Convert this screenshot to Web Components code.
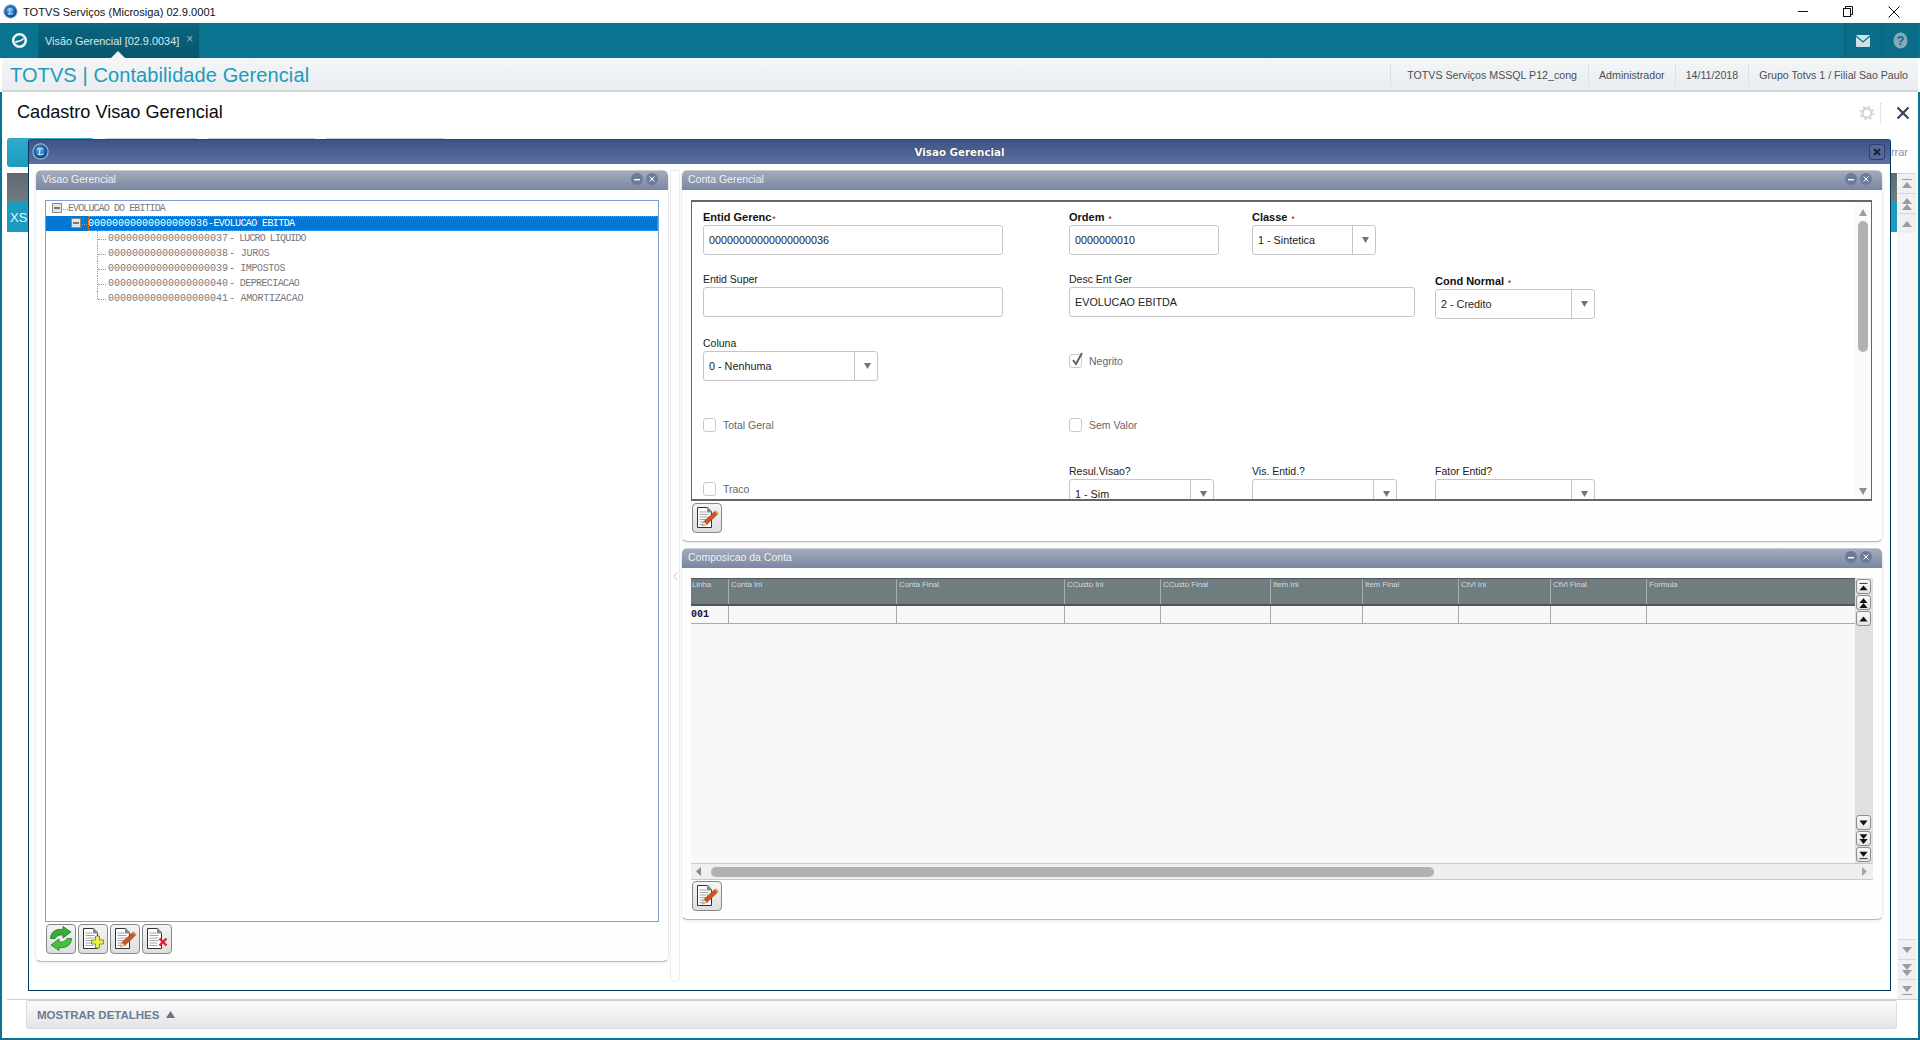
<!DOCTYPE html>
<html lang="pt">
<head>
<meta charset="utf-8">
<title>Cadastro Visao Gerencial</title>
<style>
  html, body { margin: 0; height: 1040px; overflow: hidden; background: #fff; font-family: "Liberation Sans", Arial, sans-serif; }
</style>
</head>
<body>
<totvs-app>
  <window-bar title-text="TOTVS Serviços (Microsiga) 02.9.0001"></window-bar>
  <tab-bar tab-text="Visão Gerencial [02.9.0034]"></tab-bar>
  <module-header module="TOTVS | Contabilidade Gerencial"></module-header>
  <back-page heading="Cadastro Visao Gerencial"></back-page>

  <tot-dialog dialog-title="Visao Gerencial">
    <tot-panel slot="left" panel-title="Visao Gerencial" style="height:792px">
      <tree-view>
        <tree-row level="0" toggle style="--ls:-.9px">EVOLUCAO DO EBITIDA</tree-row>
        <tree-row level="1" toggle selected code="00000000000000000036" style="--ls:-.6px">-EVOLUCAO EBITDA</tree-row>
        <tree-row level="2" code="00000000000000000037" style="--ls:-.9px">- LUCRO LIQUIDO</tree-row>
        <tree-row level="2" code="00000000000000000038" style="--ls:-.2px">- JUROS</tree-row>
        <tree-row level="2" code="00000000000000000039" style="--ls:-.4px">- IMPOSTOS</tree-row>
        <tree-row level="2" code="00000000000000000040" style="--ls:-.6px">- DEPRECIACAO</tree-row>
        <tree-row level="2" last code="00000000000000000041" style="--ls:-.3px">- AMORTIZACAO</tree-row>
      </tree-view>
      <div style="display:flex;gap:2px;padding:2px 0 0 1px">
        <icon-btn kind="refresh"></icon-btn>
        <icon-btn kind="add"></icon-btn>
        <icon-btn kind="edit"></icon-btn>
        <icon-btn kind="delete"></icon-btn>
      </div>
    </tot-panel>

    <tot-panel slot="right" panel-title="Conta Gerencial" style="height:372px">
      <form-box>
        <tot-field label="Entid Gerenc" bold required tight value="00000000000000000036" width="300"></tot-field>
        <tot-field label="Ordem" bold required value="0000000010" width="150"></tot-field>
        <tot-field label="Classe" bold required select value="1 - Sintetica" width="124"></tot-field>
        <span></span>

        <tot-field label="Entid Super" width="300"></tot-field>
        <tot-field label="Desc Ent Ger" value="EVOLUCAO EBITDA" width="346" style="grid-column:span 2"></tot-field>
        <tot-field label="Cond Normal" bold required select value="2 - Credito" width="160" style="margin-top:2px"></tot-field>

        <tot-field label="Coluna" select value="0 - Nenhuma" width="175"></tot-field>
        <tot-check label="Negrito" checked style="margin-top:18px;grid-column:span 3"></tot-check>

        <tot-check label="Total Geral" style="margin-top:20px"></tot-check>
        <tot-check label="Sem Valor" style="margin-top:20px;grid-column:span 3"></tot-check>

        <tot-check label="Traco" style="margin-top:18px"></tot-check>
        <tot-field label="Resul.Visao?" select value="1 - Sim" width="145"></tot-field>
        <tot-field label="Vis. Entid.?" select width="145"></tot-field>
        <tot-field label="Fator Entid?" select width="160"></tot-field>
      </form-box>
      <div style="padding:2px 0 0 1px"><icon-btn kind="edit"></icon-btn></div>
    </tot-panel>

    <tot-panel slot="right" panel-title="Composicao da Conta" style="height:372px">
      <data-grid></data-grid>
      <div style="padding:1px 0 0 1px"><icon-btn kind="edit"></icon-btn></div>
    </tot-panel>
  </tot-dialog>
</totvs-app>

<script>
function tri(dir, x, y, w, h, fill) {
  const pts = dir === 'up'
    ? `${x},${y + h} ${x + w},${y + h} ${x + w / 2},${y}`
    : `${x},${y} ${x + w},${y} ${x + w / 2},${y + h}`;
  return `<polygon points="${pts}" fill="${fill}"/>`;
}

// first / page / line scroll glyphs, 16x14
function scrollGlyph(kind, dir, fill) {
  const bar = (y) => `<rect x="3" y="${y}" width="10" height="1" fill="${fill}"/>`;
  if (kind === 'end') {
    return dir === 'up'
      ? bar(2) + tri('up', 3, 5, 10, 6, fill)
      : tri('down', 3, 3, 10, 6, fill) + bar(11);
  }
  if (kind === 'page') {
    return tri(dir, 3, 1, 10, 6, fill) + tri(dir, 3, 7, 10, 6, fill);
  }
  return tri(dir, 3, 4, 10, 6, fill);
}

function totvsLogo(size) {
  return `<svg width="${size}" height="${size}" viewBox="0 0 20 20">
    <defs><radialGradient id="g" cx="45%" cy="42%" r="60%"><stop offset="0" stop-color="#6db4ee"/><stop offset=".65" stop-color="#1464b2"/><stop offset="1" stop-color="#0b3c78"/></radialGradient></defs>
    <circle cx="10" cy="10" r="9.6" fill="#a9b7c8"/>
    <circle cx="10" cy="10" r="8.2" fill="url(#g)"/>
    <path d="M6 7.500c2-1.500 5-1.500 7 0M9 7.500v5.500M6.500 13c2 1 5 1 7-.5" fill="none" stroke="#d5e8f8" stroke-width="1.300"/>
  </svg>`;
}

class TotvsApp extends HTMLElement {
  constructor() {
    super();
    this.attachShadow({ mode: 'open' }).innerHTML = `
      <style>
        :host { display: flex; flex-direction: column; position: relative; height: 1040px; width: 1920px; overflow: hidden; background: #fff; }
      </style>
      <slot></slot>`;
  }
}

class WindowBar extends HTMLElement {
  constructor() {
    super();
    this.attachShadow({ mode: 'open' }).innerHTML = `
      <style>
        :host { display: flex; align-items: center; height: 23px; background: #fff; color: #111; font: 11.100px "Liberation Sans", Arial, sans-serif; flex: none; }
        .logo { display: flex; margin: 0 5px 0 3px; }
        .name { flex: 1; }
        .ctl { width: 45px; height: 23px; display: flex; align-items: center; justify-content: center; }
        .ctl:last-child { width: 49px; padding-right: 4px; box-sizing: border-box; }
      </style>
      <span class="logo">${totvsLogo(15)}</span>
      <span class="name">${this.getAttribute('title-text')}</span>
      <span class="ctl"><svg width="11" height="11"><rect x="0" y="5" width="10" height="1" fill="#111"/></svg></span>
      <span class="ctl"><svg width="11" height="12"><rect x="0.500" y="2.500" width="7" height="8" fill="#fff" stroke="#111"/><path d="M2.500 2.500V.500h7v8h-2" fill="none" stroke="#111"/></svg></span>
      <span class="ctl"><svg width="12" height="12"><path d="M.5.500l11 11M11.500.500l-11 11" stroke="#111" fill="none"/></svg></span>`;
  }
}

class TabBar extends HTMLElement {
  constructor() {
    super();
    this.attachShadow({ mode: 'open' }).innerHTML = `
      <style>
        :host { display: flex; height: 35px; background: #0a7390; flex: none; color: #fff; font: 10.900px "Liberation Sans", Arial, sans-serif; }
        .home { width: 38px; display: flex; align-items: center; justify-content: center; border-right: 1px solid #0a6580; }
        .tab { position: relative; width: 160px; display: flex; align-items: center; padding-left: 6px; box-sizing: border-box; background: linear-gradient(#0a667f, #07566c); color: #dbe9ee; white-space: nowrap; }
        .tab b { font-weight: normal; margin-left: 7px; margin-top: -3px; color: #8db7c4; font-size: 12px; }
        .tab i { position: absolute; left: 72px; bottom: 0; border: 7px solid transparent; border-top: 0; border-bottom-color: #f0f2f4; }
        .fill { flex: 1; }
        .cell { width: 36px; display: flex; align-items: center; justify-content: center; background: #0a6c87; border-left: 1px solid #0a627a; }
      </style>
      <span class="home"><svg width="17" height="17" viewBox="0 0 17 17"><circle cx="8.500" cy="8.500" r="6.300" fill="none" stroke="#f2f6f8" stroke-width="2.600"/><path d="M4.500 10.500c2.500-2.500 3.500 1 8-4" fill="none" stroke="#f2f6f8" stroke-width="1.800"/></svg></span>
      <span class="tab">${this.getAttribute('tab-text')}<b>×</b><i></i></span>
      <span class="fill"></span>
      <span class="cell"><svg width="14" height="12" viewBox="0 0 14 12"><rect width="14" height="12" rx="1" fill="#cfe1e8"/><path d="M0 1l7 6 7-6" fill="none" stroke="#0a6c87" stroke-width="1.200"/></svg></span>
      <span class="cell" style="margin-right:2px"><svg width="15" height="17" viewBox="0 0 15 17"><ellipse cx="7.500" cy="8.500" rx="7" ry="8" fill="#83a9b8"/><text x="7.500" y="13" text-anchor="middle" font-family="Liberation Sans" font-weight="bold" font-size="13" fill="#0a6c87">?</text></svg></span>`;
  }
}

class ModuleHeader extends HTMLElement {
  constructor() {
    super();
    const info = ['TOTVS Serviços MSSQL P12_cong', 'Administrador', '14/11/2018', 'Grupo Totvs 1 / Filial Sao Paulo'];
    this.attachShadow({ mode: 'open' }).innerHTML = `
      <style>
        :host { display: flex; align-items: center; height: 34px; box-sizing: border-box; margin: 0 2px; padding-left: 8px; padding-top: 2px; flex: none;
          background: linear-gradient(#f4f6f7, #e9edf0); border-bottom: 2px solid #d2d5d8; }
        h1 { flex: 1; margin: 0; font: normal 20px "Liberation Sans", Arial, sans-serif; letter-spacing: .1px; color: #1b9cbd; }
        span { height: 22px; display: flex; align-items: center; padding: 0 10px; font-size: 10.650px; color: #4a4f55; border-left: 1px solid #dcdfe2; }
        span:first-of-type { padding: 0 11px 0 16px; }
        span:last-of-type { padding-right: 10px; }
      </style>
      <h1>${this.getAttribute('module')}</h1>
      ${info.map((t) => `<span>${t}</span>`).join('')}`;
  }
}

class ScrollButton extends HTMLElement {
  constructor() {
    super();
    const kind = this.getAttribute('kind');
    const dir = this.getAttribute('dir');
    this.attachShadow({ mode: 'open' }).innerHTML = `
      <style>
        :host { display: flex; align-items: center; justify-content: center; box-sizing: border-box; }
        :host([soft]) { height: 20px; width: 18px; background: #eef0f2; border-top: 1px solid #d5d7d9; }
        :host([hard]) { height: 15px; width: 15px; margin-bottom: 1px; background: linear-gradient(#fafafa, #e4e4e4); border: 1px solid #8d8d8d; border-radius: 3px; }
      </style>
      <svg width="16" height="14" viewBox="0 0 16 14">${scrollGlyph(kind, dir, this.hasAttribute('hard') ? '#111' : '#9a9da2')}</svg>`;
  }
}

class BackPage extends HTMLElement {
  constructor() {
    super();
    this.attachShadow({ mode: 'open' }).innerHTML = `
      <style>
        :host { display: flex; flex-direction: column; flex: 1; min-height: 0; border: 2px solid #0a7390; border-top: 0; box-sizing: border-box; background: #fff; }
        .head { height: 46px; flex: none; box-sizing: border-box; display: flex; align-items: flex-start; padding: 9px 0 0 15px; margin-top: 1px; }
        h2 { flex: 1; margin: 0; font: normal 18.100px "Liberation Sans", Arial, sans-serif; color: #0b0b0b; line-height: 20px; }
        .tools { display: flex; align-items: center; height: 22px; }
        .tools u { width: 0; height: 20px; border-left: 1px dotted #ccc; margin: 0 15px 0 6px; }
        .tools svg:last-child { margin-right: 8px; }
        .tabs { height: 29px; flex: none; display: flex; gap: 11px; padding-left: 5px; margin-top: -1px; }
        .tabs i { display: block; height: 1px; background: #c7cdd3; margin-top: 0; }
        .tabs .on { width: 87px; height: 29px; background: linear-gradient(#32aac9, #1b9bbd); border-radius: 3px; }
        .more { margin-left: auto; font-size: 11px; color: #8b8fa0; padding: 8px 10px 0 0; }
        .mid { flex: 1; display: flex; margin-top: 6px; min-height: 0; }
        .main { flex: 1; padding-left: 5px; }
        .dark { height: 29px; background: linear-gradient(#5f6b70, #707c80); }
        .blue { height: 30px; background: #1b9bbd; color: #e6f6fa; font-size: 13px; display: flex; align-items: center; padding-left: 3px; }
        .side { width: 21px; background: #f6f7f9; display: flex; flex-direction: column; justify-content: space-between; padding-left: 1px; box-sizing: border-box; }
        .foot { height: 39px; flex: none; margin-left: 5px; border-top: 1px solid #cfcfcf; box-sizing: border-box; padding-left: 19px; }
        .bar { width: 1871px; height: 29px; box-sizing: border-box; background: linear-gradient(#fbfbfb, #e4e4e4); border: 1px solid #dcdcdc; border-top-color: #cfcfcf; border-radius: 3px; display: flex; align-items: center; gap: 7px; padding-left: 10px; font: bold 11.500px "Liberation Sans", Arial, sans-serif; color: #6c7c95; }
      </style>
      <div class="head">
        <h2>${this.getAttribute('heading')}</h2>
        <div class="tools">
          <svg width="14" height="14" viewBox="0 0 14 14"><circle cx="7" cy="7" r="4.500" fill="none" stroke="#cfd2d4" stroke-width="2"/><circle cx="7" cy="7" r="6.500" fill="none" stroke="#d8dadc" stroke-width="1.800" stroke-dasharray="2.500 2.600"/></svg>
          <u></u>
          <svg width="14" height="14" viewBox="0 0 14 14"><path d="M1.500 1.500l11 11M12.500 1.500l-11 11" stroke="#33465c" stroke-width="2.200" fill="none"/></svg>
        </div>
      </div>
      <div class="tabs">
        <div class="on"></div>
        <i style="width:92px"></i><i style="width:107px"></i><i style="width:118px"></i>
        <span class="more">Encerrar</span>
      </div>
      <div class="mid">
        <div class="main"><div class="dark"></div><div class="blue">XS</div></div>
        <div class="side">
          <div>
            <scroll-button soft kind="end" dir="up"></scroll-button>
            <scroll-button soft kind="page" dir="up"></scroll-button>
            <scroll-button soft kind="line" dir="up"></scroll-button>
          </div>
          <div>
            <scroll-button soft kind="line" dir="down"></scroll-button>
            <scroll-button soft kind="page" dir="down"></scroll-button>
            <scroll-button soft kind="end" dir="down"></scroll-button>
          </div>
        </div>
      </div>
      <div class="foot"><div class="bar">MOSTRAR DETALHES <svg width="9" height="7"><polygon points="0,7 9,7 4.500,0" fill="#6c7288"/></svg></div></div>`;
  }
}

class TotDialog extends HTMLElement {
  constructor() {
    super();
    this.attachShadow({ mode: 'open' }).innerHTML = `
      <style>
        :host { display: flex; flex-direction: column; position: absolute; left: 28px; top: 139px; width: 1863px; height: 852px; box-sizing: border-box; background: #fff; border: 1px solid #04385e; border-radius: 3px 3px 0 0; border-top-color: #39445a; }
        .title { height: 24px; flex: none; box-sizing: border-box; padding-bottom: 1px; position: relative; background: linear-gradient(#3d5387, #5c70a0); color: #fff; display: flex; align-items: center; justify-content: center; font: bold 10.300px "DejaVu Sans", sans-serif; text-shadow: 0 0 1px #222; }
        .logo { position: absolute; left: 3px; top: 3px; display: flex; }
        .x { position: absolute; right: 5px; top: 4px; width: 16px; height: 16px; box-sizing: border-box; border: 1px solid #2c3f6e; border-radius: 3px; background: #55689a; display: flex; align-items: center; justify-content: center; }
        .body { flex: 1; display: flex; padding: 6px 7px 0 6px; min-height: 0; }
        .left { width: 634px; flex: none; }
        .split { width: 10px; flex: none; height: 812px; margin-left: 1px; box-sizing: border-box; border: 1px solid #ebebeb; border-radius: 0 0 4px 4px; display: flex; align-items: center; justify-content: center; }
        .right { flex: 1; margin-left: 1px; display: flex; flex-direction: column; gap: 6px; min-width: 0; }
      </style>
      <div class="title">
        <span class="logo">${totvsLogo(17)}</span>
        ${this.getAttribute('dialog-title')}
        <span class="x"><svg width="8" height="8"><path d="M1 1l6 6M7 1l-6 6" stroke="#1b2238" stroke-width="2"/></svg></span>
      </div>
      <div class="body">
        <div class="left"><slot name="left"></slot></div>
        <div class="split"><svg width="5" height="9"><path d="M4.500 .5L.5 4.500l4 4" fill="none" stroke="#c4c4c4"/></svg></div>
        <div class="right"><slot name="right"></slot></div>
      </div>`;
  }
}

class TotPanel extends HTMLElement {
  constructor() {
    super();
    this.attachShadow({ mode: 'open' }).innerHTML = `
      <style>
        :host { display: flex; flex-direction: column; box-sizing: border-box; border-radius: 6px; border-bottom: 1px solid #b8b8b8; border-left: 1px solid #ececec; border-right: 1px solid #ececec; background: #fefefe; overflow: hidden; box-shadow: 0 2px 3px #f0f0f0; }
        .head { height: 20px; flex: none; margin: 0 -1px; background: linear-gradient(#a3abbb, #7a87a2); border-top: 1px solid #c6cad2; box-sizing: border-box; color: #eef0f4; font: 10.500px "Liberation Sans", Arial, sans-serif; display: flex; align-items: center; padding: 0 0 3px 7px; }
        .head span { flex: 1; }
        .round { width: 12px; height: 12px; border-radius: 50%; background: #6d7b9a; margin-right: 3px; display: flex; align-items: center; justify-content: center; }
        .round:last-child { margin-right: 11px; }
        .body { flex: 1; padding: 10px 10px 0 9px; min-height: 0; }
      </style>
      <div class="head">
        <span>${this.getAttribute('panel-title')}</span>
        <i class="round"><svg width="6" height="6"><rect y="3" width="6" height="1.400" fill="#fff"/></svg></i>
        <i class="round"><svg width="6" height="6"><path d="M.5.500l5 5M5.500.500l-5 5" stroke="#fff"/></svg></i>
      </div>
      <div class="body"><slot></slot></div>`;
  }
}

class TreeView extends HTMLElement {
  constructor() {
    super();
    this.attachShadow({ mode: 'open' }).innerHTML = `
      <style>
        :host { display: block; height: 722px; margin-right: -1px; box-sizing: border-box; border: 1px solid #7f9fdc; background: #fff; }
      </style>
      <slot></slot>`;
  }
}

class TreeRow extends HTMLElement {
  constructor() {
    super();
    const level = Number(this.getAttribute('level'));
    const toggle = this.hasAttribute('toggle');
    const code = this.getAttribute('code');
    const boxX = 6 + level * 19;
    const minus = `<svg class="tg" width="10" height="10" style="left:${boxX}px"><rect x=".5" y=".5" width="9" height="9" fill="#e4e4e4" stroke="#8a8a8a"/><rect x="2" y="4" width="6" height="2" fill="#777"/></svg>`;
    // dotted connectors for the leaves of the tree
    const leaf = `<i class="v" style="${this.hasAttribute('last') ? 'height:8px' : ''}"></i><i class="h"></i>`;
    const textLeft = level === 0 ? 22 : level === 1 ? 42 : 62;
    this.attachShadow({ mode: 'open' }).innerHTML = `
      <style>
        :host { display: block; height: 15px; position: relative; overflow: hidden; font: 10px/15px "Liberation Mono", "DejaVu Sans Mono", monospace; color: #77777f; white-space: nowrap; }
        :host([selected]) { background: #0078d7; color: #fff; }
        .tg { position: absolute; top: 2px; }
        .v { position: absolute; left: 51px; top: 0; height: 15px; border-left: 1px dotted #999; }
        .h { position: absolute; left: 52px; top: 8px; width: 8px; border-top: 1px dotted #999; }
        .dots { position: absolute; top: 8px; width: 5px; border-top: 1px dotted #999; }
        .t { position: absolute; top: 0; right: 0; box-sizing: border-box; height: 15px; }
        :host([selected]) .t { outline: 1px dotted #f08020; outline-offset: -1px; }
        .desc { letter-spacing: var(--ls, 0); }
        :host([level="2"]) .desc { margin-left: 1px; }
      </style>
      ${toggle ? minus + `<i class="dots" style="left:${boxX + 11}px"></i>` : leaf}
      <span class="t" style="left:${textLeft}px">${code ? `<span>${code}</span>` : ''}<span class="desc"><slot></slot></span></span>`;
  }
}

class IconBtn extends HTMLElement {
  constructor() {
    super();
    const doc = `
      <path d="M4.500 2.500h10l4 4v16h-14z" fill="#fff" stroke="#333"/>
      <path d="M14 2h1l4 4.500v1h-5z" fill="#8a8a8a"/>
      <path d="M6.500 7h7M6.500 9.500h9M6.500 12h9M6.500 14.500h9M6.500 17h8M6.500 19.500h8" stroke="#a4a4a4"/>`;
    const icons = {
      refresh: `
        <path d="M3.500 12.500C3.500 6 9 2.500 16 3.500V0.500l8 5.500-8 6V9c-4-.5-6 .5-8 3.500z" fill="#35ad3a" stroke="#1d7a24" stroke-width=".8"/>
        <path d="M24.500 12.500C24.500 19 19 22.500 12 21.500v3l-8-5.500 8-6v3c4 .5 6-.5 8-3.500z" fill="#46bf45" stroke="#1d7a24" stroke-width=".8"/>`,
      add: doc + `<path d="M17 12h4v4h4v4h-4v4h-4v-4h-4v-4h4z" transform="translate(-.5 -2)" fill="#e8f24a" stroke="#6c7a20" stroke-width=".8"/>`,
      edit: doc + `<path d="M9 21l1.800-4.500L21.500 6.500l3 2.800L14 19.500z" fill="#c9552b" stroke="#8e3a1c" stroke-width=".5"/><path d="M21.500 6.500l1.200-1.200 3 2.800-1.200 1.200z" fill="#e6a93a"/><path d="M9 21l1.800-4.500 3.200 3z" fill="#f1d9a8"/>`,
      delete: doc + `<path d="M16.500 12.500l7 7M23.500 12.500l-7 7" fill="none" stroke="#e0202c" stroke-width="2.400"/>`
    };
    this.attachShadow({ mode: 'open' }).innerHTML = `
      <style>
        :host { display: inline-flex; align-items: center; justify-content: center; width: 30px; height: 30px; box-sizing: border-box; border: 1px solid #888; border-radius: 4px; background: linear-gradient(#f5f5f5, #dedede); flex: none; }
      </style>
      <svg width="28" height="26" viewBox="0 0 28 26">${icons[this.getAttribute('kind')]}</svg>`;
  }
}

class FormBox extends HTMLElement {
  constructor() {
    super();
    this.attachShadow({ mode: 'open' }).innerHTML = `
      <style>
        :host { display: block; position: relative; height: 301px; box-sizing: border-box; border: 1px solid #666; border-top-width: 2px; border-bottom-width: 2px; overflow: hidden; background: #fff; }
        .grid { display: grid; grid-template-columns: 366px 183px 183px 1fr; grid-template-rows: 45px 47px 45px 49px 45px; row-gap: 17px; padding: 8px 0 0 11px; align-items: start; }
        .sb { position: absolute; right: 0; top: 0; bottom: 0; width: 16px; background: #fafafa; }
        .thumb { position: absolute; left: 3px; top: 19px; width: 10px; height: 131px; border-radius: 5px; background: #b1b1b1; }
        svg { position: absolute; left: 1px; }
      </style>
      <div class="grid"><slot></slot></div>
      <div class="sb">
        <svg width="14" height="10" style="top:5px"><polygon points="3,9 11,9 7,2" fill="#9a9da2"/></svg>
        <div class="thumb"></div>
        <svg width="14" height="10" style="bottom:2px"><polygon points="3,1 11,1 7,8" fill="#8d9096"/></svg>
      </div>`;
  }
}

class TotField extends HTMLElement {
  constructor() {
    super();
    const bold = this.hasAttribute('bold');
    const select = this.hasAttribute('select');
    const req = this.hasAttribute('required');
    const value = this.getAttribute('value') || '';
    this.attachShadow({ mode: 'open' }).innerHTML = `
      <style>
        :host { display: block; font-family: "Liberation Sans", Arial, sans-serif; }
        label { display: block; height: 15px; line-height: 14px; font-size: 10.500px; color: #222; white-space: nowrap; }
        label.b { font: bold 11px/14px "Liberation Sans", Arial, sans-serif; color: #111; }
        label em { color: #f0304a; font-style: normal; font-weight: bold; margin-left: 4px; font-size: 9px; }
        label.t em { margin-left: 1px; }
        .in { width: ${this.getAttribute('width')}px; height: 30px; box-sizing: border-box; border: 1px solid #c6c6c6; border-radius: 3px; background: #fff; display: flex; font-size: 10.800px; color: #222; }
        .v { flex: 1; padding-left: 5px; display: flex; align-items: center; white-space: nowrap; }
        .a { width: 23px; border-left: 1px solid #c6c6c6; display: flex; align-items: center; justify-content: center; padding-left: 3px; box-sizing: border-box; }
      </style>
      <label class="${bold ? 'b' : ''} ${this.hasAttribute('tight') ? 't' : ''}">${this.getAttribute('label')}${req ? '<em>•</em>' : ''}</label>
      <div class="in">
        <span class="v">${value}</span>
        ${select ? '<span class="a"><svg width="9" height="8"><polygon points="1,1 8,1 4.500,7" fill="#6e7480"/></svg></span>' : ''}
      </div>`;
  }
}

class TotCheck extends HTMLElement {
  constructor() {
    super();
    const mark = this.hasAttribute('checked')
      ? '<svg width="14" height="15" viewBox="0 0 14 15" style="position:absolute;left:0;top:-3px"><path d="M3 8l3 4 6-11" fill="none" stroke="#555b66" stroke-width="1.800"/></svg>'
      : '';
    this.attachShadow({ mode: 'open' }).innerHTML = `
      <style>
        :host { display: flex; align-items: center; gap: 7px; font: 10.500px "Liberation Sans", Arial, sans-serif; color: #666; height: 14px; }
        .c { position: relative; width: 13px; height: 14px; box-sizing: border-box; border: 1px solid #c9c9c9; border-radius: 3px; background: #fff; flex: none; }
      </style>
      <span class="c">${mark}</span><span>${this.getAttribute('label')}</span>`;
  }
}

class DataGrid extends HTMLElement {
  constructor() {
    super();
    const cols = ['Linha', 'Conta Ini', 'Conta Final', 'CCusto Ini', 'CCusto Final', 'Item Ini', 'Item Final', 'CtVl Ini', 'CtVl Final', 'Formula'];
    const widths = [37, 168, 168, 96, 110, 92, 96, 92, 96, 209];
    const tpl = widths.map((w) => w + 'px').join(' ');
    this.attachShadow({ mode: 'open' }).innerHTML = `
      <style>
        :host { display: grid; grid-template-columns: 1164px 18px; grid-template-rows: 285px 17px; height: 302px; font-family: "Liberation Sans", Arial, sans-serif; }
        .table { background: #f8f8f8; display: flex; flex-direction: column; }
        .row { display: grid; grid-template-columns: ${tpl}; flex: none; }
        .hd { height: 28px; background: #6f7c80; border-top: 1px solid #4f595c; border-bottom: 2px solid #4f595c; box-sizing: border-box; }
        .hd span { color: #d5dadc; font-size: 8px; line-height: 11px; padding: 0 0 0 2px; border-left: 1px solid #a7aeb0; letter-spacing: -.1px; white-space: nowrap; overflow: hidden; }
        .hd span:first-child { border-left: 0; padding-left: 1px; }
        .bd { height: 18px; border-bottom: 1px solid #a9a9a9; box-sizing: border-box; }
        .bd span { border-left: 1px solid #a9a9a9; font: bold 10px/17px "Liberation Mono", monospace; color: #1a1030; }
        .bd span:first-child { border-left: 0; }
        .vs { background: #e0e0e0; display: flex; flex-direction: column; justify-content: space-between; padding: 1px 0 0 1px; box-sizing: border-box; }
        .hs { grid-column: 1 / 3; background: #efefef; border-top: 1px solid #c9c9c9; border-bottom: 1px solid #c9c9c9; position: relative; box-sizing: border-box; }
        .hs i { position: absolute; left: 20px; top: 3px; width: 723px; height: 10px; border-radius: 5px; background: #b1b1b1; }
        .hs svg { position: absolute; top: 2px; }
      </style>
      <div class="table">
        <div class="row hd">${cols.map((c) => `<span>${c}</span>`).join('')}</div>
        <div class="row bd"><span>001</span>${cols.slice(1).map(() => '<span></span>').join('')}</div>
      </div>
      <div class="vs">
        <div>
          <scroll-button hard kind="end" dir="up"></scroll-button>
          <scroll-button hard kind="page" dir="up"></scroll-button>
          <scroll-button hard kind="line" dir="up"></scroll-button>
        </div>
        <div>
          <scroll-button hard kind="line" dir="down"></scroll-button>
          <scroll-button hard kind="page" dir="down"></scroll-button>
          <scroll-button hard kind="end" dir="down"></scroll-button>
        </div>
      </div>
      <div class="hs">
        <svg width="8" height="11" style="left:4px"><polygon points="6,1 6,10 1,5.500" fill="#8a8a8a"/></svg>
        <i></i>
        <svg width="8" height="11" style="right:4px"><polygon points="1,1 1,10 6,5.500" fill="#a4a4a4"/></svg>
      </div>`;
  }
}

customElements.define('scroll-button', ScrollButton);
customElements.define('totvs-app', TotvsApp);
customElements.define('window-bar', WindowBar);
customElements.define('tab-bar', TabBar);
customElements.define('module-header', ModuleHeader);
customElements.define('back-page', BackPage);
customElements.define('tot-dialog', TotDialog);
customElements.define('tot-panel', TotPanel);
customElements.define('tree-view', TreeView);
customElements.define('tree-row', TreeRow);
customElements.define('icon-btn', IconBtn);
customElements.define('form-box', FormBox);
customElements.define('tot-field', TotField);
customElements.define('tot-check', TotCheck);
customElements.define('data-grid', DataGrid);
</script>
</body>
</html>
